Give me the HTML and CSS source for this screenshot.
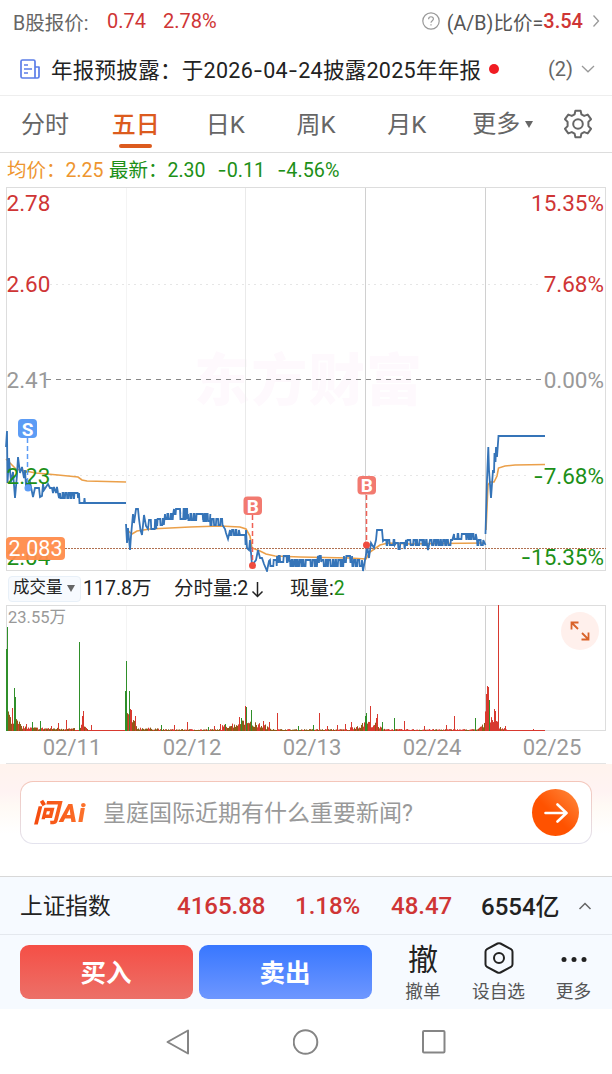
FILE: index.html
```html
<!DOCTYPE html>
<html lang="zh-CN">
<head>
    <meta charset="UTF-8">
    <meta name="viewport" content="width=device-width, initial-scale=1.0">
    <title>五日</title>
    <link rel="stylesheet" href="styles.css">
</head>
<body>
    <div class="quote">
        <span class="quote-label">B股报价:</span>
        <span class="up quote-price">0.74</span>
        <span class="up quote-pct">2.78%</span>
        <div class="ratio">
            <svg width="18" height="18" viewBox="0 0 18 18" fill="none" stroke="#999" stroke-width="1.2">
                <circle cx="9" cy="9" r="8.2"/>
                <path d="M6.6 7.2C6.6 4 11.4 4 11.4 7C11.4 8.6 9 8.8 9 10.8M9 12.3V13.6"/>
            </svg>
            <span class="ratio-label">(A/B)比价=</span><span class="up ratio-value">3.54</span>
            <svg class="ratio-arrow" width="8" height="14" viewBox="0 0 8 14" fill="none" stroke="#999" stroke-width="1.3"><path d="M1.5 1.5L6.5 7L1.5 12.5"/></svg>
        </div>
    </div>

    <div class="notice">
        <svg width="20" height="20" viewBox="0 0 20 20" fill="none" stroke="#5b7de8" stroke-width="1.7" stroke-linejoin="round">
            <path d="M15 19H2.5Q1 19 1 17.5V2.5Q1 1 2.5 1H13.5Q15 1 15 2.5V19H17.5Q19 19 19 17.5V8H15"/>
            <path d="M4 6H8M4 10H12M4 14H8"/>
        </svg>
        <span class="notice-text">年报预披露：于2026<span class="dash">-</span>04<span class="dash">-</span>24披露2025年年报</span>
        <i class="dot"></i>
        <span class="notice-count">(2)</span>
        <svg width="14" height="8" viewBox="0 0 14 8" fill="none" stroke="#999" stroke-width="1.3"><path d="M1 1L7 6.8L13 1"/></svg>
    </div>

    <div class="tabs">
        <span class="tab">分时</span>
        <span class="tab active">五日</span>
        <span class="tab">日K</span>
        <span class="tab">周K</span>
        <span class="tab">月K</span>
        <span class="tab tab-more">更多<i class="caret"></i></span>
        <svg class="gear" width="30" height="30" viewBox="0 0 30 30" fill="none" stroke="#666" stroke-width="2" stroke-linejoin="round">
            <path d="M12.4 1.8H17.6L18.4 5.3L21.2 6.9L24.7 5.6L28 10.2L25.4 12.9V17.1L28 19.8L24.7 24.4L21.2 23.1L18.4 24.7L17.6 28.2H12.4L11.6 24.7L8.8 23.1L5.3 24.4L2 19.8L4.6 17.1V12.9L2 10.2L5.3 5.6L8.8 6.9L11.6 5.3Z"/>
            <circle cx="15" cy="15" r="4.8"/>
        </svg>
    </div>

    <div class="summary">
        <span class="avg">均价：2.25</span>
        <span class="down">最新：2.30</span>
        <span class="down change"><span class="dash">-</span>0.11</span>
        <span class="down change"><span class="dash">-</span>4.56%</span>
    </div>

    <svg class="chart" width="612" height="385" viewBox="0 187 612 385">
        <text class="watermark" x="308" y="400" text-anchor="middle" textLength="228">东方财富</text>
        <g class="grid">
            <path d="M6 187.5H606M6.5 187V571M605.5 187V571M6 570.5H606"/>
            <path class="faint" d="M126.5 188V570"/>
            <path class="light" d="M245.5 188V570"/>
            <path class="strong" d="M365.5 188V570M485.5 188V570"/>
            <path class="dots" d="M50 284.5H540M50 475.5H530"/>
        </g>
        <path class="zero" d="M46 379.5H543"/>
        <path class="cost" d="M65 548.5H606"/>
        <g class="axis">
            <text class="up" x="6.5" y="211">2.78</text>
            <text class="up" x="6.5" y="292">2.60</text>
            <text class="flat" x="6.5" y="388">2.41</text>
        </g>
        <g id="lines"></g>
        <g class="axis">
            <text class="down" x="6.5" y="484">2.23</text>
            <text class="down" x="6.5" y="565">2.04</text>
            <text class="up" x="604" y="211" text-anchor="end">15.35%</text>
            <text class="up" x="604" y="292" text-anchor="end">7.68%</text>
            <text class="flat" x="604" y="388" text-anchor="end">0.00%</text>
            <text class="down" x="604" y="484" text-anchor="end"><tspan class="dash">-</tspan>7.68%</text>
            <text class="down" x="604" y="565" text-anchor="end"><tspan class="dash">-</tspan>15.35%</text>
        </g>
        <rect x="6" y="537" width="59" height="23" rx="4" fill="#ff8c4b" fill-opacity="0.95"/>
        <text class="cost-label" x="8.5" y="556">2.083</text>
        <g class="sell">
            <path d="M27.5 438V486"/>
            <circle cx="28" cy="488" r="3.5"/>
            <rect x="18" y="419" width="19" height="19" rx="4"/>
            <text x="27.5" y="435.5">S</text>
        </g>
        <g class="buy">
            <path d="M252.5 515V562"/>
            <circle cx="252.5" cy="565.5" r="3.5"/>
            <rect x="243.5" y="496.5" width="18.5" height="18.5" rx="4"/>
            <text x="252.7" y="512.5">B</text>
            <path d="M366.5 495V543"/>
            <circle cx="366.5" cy="545" r="3.5"/>
            <rect x="357.5" y="476" width="18.5" height="18.5" rx="4"/>
            <text x="366.7" y="492">B</text>
        </g>
    </svg>

    <div class="volume-info">
        <span class="select">成交量<i class="caret"></i></span>
        <span class="vol-total">117.8万</span>
        <span class="vol-minute">分时量:2<svg width="13" height="17" viewBox="0 0 13 17" fill="none" stroke="#222" stroke-width="1.5"><path d="M6.5 1V15.5M1.5 10.5L6.5 15.5L11.5 10.5"/></svg></span>
        <span class="vol-now">现量:<span class="down">2</span></span>
    </div>

    <svg class="chart" width="612" height="126" viewBox="0 605 612 126">
        <g class="grid">
            <path d="M6 605.5H606M6.5 605V731M605.5 605V731M6 730.5H606"/>
            <path class="faint" d="M126.5 606V730"/>
            <path class="light" d="M245.5 606V730"/>
            <path class="strong" d="M365.5 606V730M485.5 606V730"/>
        </g>
        <text class="vol-max" x="8" y="623">23.55万</text>
        <g id="bars"></g>
        <circle cx="580" cy="631" r="19" fill="#fff0ec"/>
        <path d="M571.5 629.5V622.5H578.5M572 623L578 629M588.5 632.5V639.5H581.5M588 639L582 633" fill="none" stroke="#d9632a" stroke-width="1.8"/>
    </svg>

    <div class="dates">
        <span>02/11</span>
        <span>02/12</span>
        <span>02/13</span>
        <span>02/24</span>
        <span>02/25</span>
    </div>

    <div class="ai">
        <div class="ai-box">
            <span class="ai-logo">问Ai</span>
            <span class="ai-question">皇庭国际近期有什么重要新闻?</span>
            <span class="ai-go">
                <svg width="24" height="20" viewBox="0 0 24 20" fill="none" stroke="#fff" stroke-width="2.6" stroke-linecap="round" stroke-linejoin="round"><path d="M1.5 10H22M13.5 1.5L22.5 10L13.5 18.5"/></svg>
            </span>
        </div>
    </div>

    <div class="index">
        <span class="index-name">上证指数</span>
        <b class="up index-value">4165.88</b>
        <b class="up index-pct">1.18%</b>
        <b class="up index-change">48.47</b>
        <b class="index-amount">6554亿</b>
        <svg width="14" height="8" viewBox="0 0 14 8" fill="none" stroke="#666" stroke-width="1.5"><path d="M1.5 7L7 1.5L12.5 7"/></svg>
    </div>

    <div class="actions">
        <button class="btn btn-buy">买入</button>
        <button class="btn btn-sell">卖出</button>
        <div class="action action-cancel">
            <span class="action-icon">撤</span>
            <span>撤单</span>
        </div>
        <div class="action action-watch">
            <svg class="action-icon" width="30" height="32" viewBox="0 0 30 32" fill="none" stroke="#222" stroke-width="2" stroke-linejoin="round">
                <path d="M13.5 1.5Q15 .8 16.5 1.5L27 7.2Q28.5 8 28.5 9.7V22.3Q28.5 24 27 24.8L16.5 30.5Q15 31.2 13.5 30.5L3 24.8Q1.5 24 1.5 22.3V9.7Q1.5 8 3 7.2Z"/>
                <circle cx="15" cy="16" r="5"/>
            </svg>
            <span>设自选</span>
        </div>
        <div class="action action-more">
            <svg class="action-icon" width="26" height="32" viewBox="0 0 26 32" fill="#222">
                <circle cx="3" cy="17.5" r="2.5"/><circle cx="13" cy="17.5" r="2.5"/><circle cx="23" cy="17.5" r="2.5"/>
            </svg>
            <span>更多</span>
        </div>
    </div>

    <div class="navbar">
        <svg width="24" height="26" viewBox="0 0 24 26"><path d="M22 1.5V24.5L1.5 13Z"/></svg>
        <svg width="26" height="26" viewBox="0 0 26 26"><circle cx="12.5" cy="13" r="11.8"/></svg>
        <svg width="24" height="24" viewBox="0 0 24 24"><rect x="1" y="1" width="21.5" height="21.5" rx="1"/></svg>
    </div>

    <script src="script.js"></script>
</body>
</html>
```
FILE: styles.css
```css
* {
    box-sizing: border-box;
}
body {
    margin: 0;
    width: 612px;
    height: 1074px;
    overflow: hidden;
    background: #fff;
    color: #222;
    font-family: Roboto, "Noto Sans CJK SC", sans-serif;
    white-space: nowrap;
}
svg {
    display: block;
    flex: none;
}
.up {
    color: #cf3535;
    fill: #cf3535;
}
.down {
    color: #1d9018;
    fill: #1d9018;
}
.flat {
    fill: #999;
}
.dash {
    font-family: Inter, sans-serif;
}
.caret {
    display: inline-block;
    border: 4px solid transparent;
    border-top: 7px solid #666;
    border-bottom: 0;
}

/* B share quote */
.quote {
    display: flex;
    align-items: center;
    height: 43px;
    padding: 0 12px 1px 13px;
    font-size: 20px;
}
.quote-label {
    width: 94px;
    font-size: 19.5px;
    color: #666;
}
.quote-pct {
    margin-left: 17px;
}
.ratio {
    display: flex;
    align-items: center;
    margin-left: auto;
    color: #555;
}
.ratio-label {
    margin-left: 7px;
    font-size: 19.6px;
}
.ratio-value {
    font-weight: 500;
}
.ratio-arrow {
    margin-left: 9px;
}

/* notice */
.notice {
    display: flex;
    align-items: center;
    height: 53px;
    padding: 0 17px 0 20px;
    border-bottom: 1px solid #eee;
}
.notice-text {
    margin-left: 11px;
    padding-bottom: 2px;
    font-size: 21.5px;
    letter-spacing: 0.29px;
}
.dot {
    width: 10px;
    height: 10px;
    margin-left: 8px;
    border-radius: 50%;
    background: #f01c22;
}
.notice-count {
    margin-left: auto;
    margin-right: 8px;
    font-size: 20px;
    color: #666;
}

/* period tabs */
.tabs {
    display: flex;
    align-items: center;
    height: 57px;
    padding: 0 19px 0 21px;
    border-bottom: 1px solid #ddd;
    font-size: 24px;
    line-height: 58px;
    color: #666;
}
.tab {
    width: 91.5px;
    height: 56px;
}
.tab.active {
    width: 94.5px;
    color: #dc5b1e;
    font-weight: 500;
}
.tab.active::after {
    content: "";
    display: block;
    width: 33px;
    height: 4px;
    margin: -10px 0 0 7px;
    border-radius: 2px;
    background: #dc5b1e;
}
.tab-more {
    display: flex;
    align-items: center;
    margin-left: -6px;
}
.tab-more .caret {
    margin-left: 5px;
}
.gear {
    margin-left: auto;
}

/* average and latest price */
.summary {
    display: flex;
    align-items: baseline;
    height: 34px;
    padding-left: 7px;
    font-size: 19.5px;
    line-height: 34px;
}
.avg {
    width: 102px;
    color: #ee952f;
}
.change {
    margin-left: 12px;
    font-size: 19.8px;
}

/* price chart */
.watermark {
    font-size: 56px;
    font-weight: 900;
    fill: #fef9fd;
}
.grid path {
    fill: none;
    stroke: #ddd;
}
.grid .faint {
    stroke: #f4f4f4;
}
.grid .light {
    stroke: #eaeaea;
}
.grid .strong {
    stroke: #d0d0d0;
}
.grid .dots {
    stroke: #e6e6e6;
    stroke-dasharray: 2 4;
}
.zero {
    stroke: #888;
    stroke-dasharray: 5 5;
}
.cost {
    stroke: #b07050;
    stroke-dasharray: 2 1;
}
.axis text {
    font-size: 22.5px;
}
.cost-label {
    font-size: 21.5px;
    fill: #fff;
}
.price-line {
    fill: none;
    stroke: #3574b8;
    stroke-width: 1.8;
}
.avg-line {
    fill: none;
    stroke: #eba04a;
    stroke-width: 1.6;
}
.sell, .buy {
    font-size: 19px;
    font-weight: 700;
    text-anchor: middle;
}
.sell {
    fill: #5c9cf5;
}
.buy {
    fill: #f27a70;
}
.buy circle {
    fill: #ef4c3f;
}
.sell path {
    stroke: #5c9cf5;
    stroke-width: 1.5;
    stroke-dasharray: 5 3;
}
.buy path {
    stroke: #ef6055;
    stroke-width: 1.5;
    stroke-dasharray: 5 3;
}
.sell text, .buy text {
    fill: #fff;
}

/* volume */
.volume-info {
    display: flex;
    align-items: center;
    height: 33px;
    padding-left: 8px;
    font-size: 19.5px;
    line-height: 24px;
}
.select {
    display: flex;
    align-items: center;
    width: 73px;
    height: 26px;
    padding: 0 0 1px 4px;
    border: 1px solid #e8f0f8;
    border-radius: 4px;
    background: #f7fafe;
    font-size: 16.5px;
}
.select .caret {
    margin: 1px 0 0 4px;
}
.vol-total {
    width: 91px;
    margin-left: 2px;
}
.vol-minute {
    display: flex;
    align-items: center;
    width: 116px;
}
.vol-minute svg {
    margin: 1px 0 0 3px;
}
.vol-max {
    font-size: 16.5px;
    fill: #999;
}
.bar-up {
    stroke: #d8392f;
}
.bar-down {
    stroke: #2f8f2a;
}
.bar-mixed {
    stroke: #8d5a16;
}
.dates {
    display: grid;
    grid-template-columns: repeat(5, 120px);
    align-items: center;
    height: 33px;
    margin: 0 6px;
    padding-left: 6px;
    border-bottom: 1px solid #e4e4e4;
    font-size: 22px;
    text-align: center;
    color: #999;
}

/* AI question */
.ai {
    height: 112px;
    padding: 17px 20px 0;
    background: linear-gradient(#fff3ed, #fff3f3 25%, #fffaf5 38%, #fff 62%);
}
.ai-box {
    display: flex;
    align-items: center;
    height: 63px;
    padding: 0 12px;
    border: 1px solid transparent;
    border-radius: 13px;
    background: linear-gradient(#fff, #fff) padding-box, linear-gradient(#f4c5b9, #e3e3ee) border-box;
}
.ai-logo {
    width: 70px;
    padding-bottom: 4px;
    font-size: 26px;
    font-weight: 900;
    font-style: italic;
    letter-spacing: 1px;
    color: transparent;
    background: linear-gradient(90deg, #f4490c, #ff8138);
    background-clip: text;
}
.ai-question {
    padding-bottom: 3px;
    font-size: 23px;
    color: #999;
}
.ai-go {
    display: flex;
    align-items: center;
    justify-content: center;
    width: 47px;
    height: 47px;
    margin-left: auto;
    border-radius: 50%;
    background: linear-gradient(45deg, #ff5200 45%, #ff8c40);
}

/* index row */
.index {
    display: flex;
    align-items: center;
    height: 58px;
    padding: 0 20px;
    border-top: 1px solid #d8d8d8;
    background: #f6faff;
    font-size: 24px;
}
.index b {
    font-weight: 500;
}
.index-name {
    width: 157px;
    padding-bottom: 2px;
    font-size: 22.7px;
}
.index-value {
    width: 118px;
}
.index-pct {
    width: 96px;
}
.index-change {
    width: 90px;
}
.index-amount {
    padding-bottom: 3px;
}
.index svg {
    margin-left: auto;
}

/* trade actions */
.actions {
    display: flex;
    height: 75px;
    padding: 10px 0 0 20px;
    border-top: 1px solid #e4e8ee;
    background: #f6faff;
}
.btn {
    flex: none;
    width: 173px;
    height: 54px;
    margin-right: 6px;
    padding: 0 1px 3px 0;
    border: 0;
    border-radius: 9px;
    color: #fff;
    font: 700 25.5px Roboto, "Noto Sans CJK SC", sans-serif;
}
.btn-buy {
    background: linear-gradient(#f54f46, #ec7068);
}
.btn-sell {
    background: linear-gradient(#3877ff, #6e97ff);
}
.action {
    display: flex;
    flex: none;
    flex-direction: column;
    align-items: center;
    font-size: 17.7px;
    line-height: 24px;
    color: #555;
}
.action-icon {
    height: 32px;
    margin: -3px 0 6px;
}
.action-cancel {
    width: 90px;
}
.action-cancel .action-icon {
    font-size: 30px;
    line-height: 36px;
    color: #222;
}
.action-watch {
    width: 61px;
}
.action-more {
    width: 89px;
}

/* system navigation */
.navbar {
    display: flex;
    align-items: center;
    height: 65px;
    padding-left: 166px;
    gap: 103px;
}
.navbar svg {
    fill: none;
    stroke: #858585;
    stroke-width: 2;
    stroke-linejoin: round;
}
```
FILE: script.js
```js
const NS = 'http://www.w3.org/2000/svg';
let seed = 7;

function rand() {
    seed = (seed * 16807) % 2147483647;
    return seed / 2147483647;
}

function add(parent, tag, attrs) {
    const el = document.createElementNS(NS, tag);
    for (const key in attrs) el.setAttribute(key, attrs[key]);
    document.getElementById(parent).appendChild(el);
}

// [x, y] is a point, [x0, x1, top, bottom] is a stretch that flips between two ticks
const price = [
    [[6,447],[7,431],[7.5,483],[9,458],[11,482],[13,472],[15,498],[17,475],[18,457],[20,473],[22,467],[24,478],[25,470],[26,486],[27,479],[28,488],[30,482],[33,497],[35,488],[39,488],[40,497],[42,496],[43,484],[44,490],[46,487],[48,484],[50,488],[52,488],[53,493],[54,487],[56,493],[57,487],[58,493],[59,498],[60,78,493,498],[79,493],[79.5,503],[84,503],[84.5,498],[85,503],[126,503]],
    [[126,524],[127,543],[128,528],[130,550],[131,536],[133,514],[134,523],[136,509],[138,509],[139,519],[140.5,530],[142,535],[144,515],[146,526],[148,529],[149,156,520,529],[156,165,519,525],[165,173,514,519],[174,180,509,514],[180,188,509,519],[188,203,514,520],[203,210,514,521],[210,223,519,525],[225,529],[226,533],[228,539],[230,239,530,535],[240,246,535,545],[246,530],[247,548],[249,550],[250,540],[252,565],[256,560],[258,550],[260,558],[262,558],[264,564],[267,571],[269,561],[270,277,560,566],[277,290,556,562],[290,318,560,566],[318,322,556,562],[322,344,560,566],[344,352,556,562],[352,362,560,566],[363,571],[365,560],[366,555],[367,545],[369,558],[371,543],[374,548],[376,540],[377,530],[382,530],[383,541],[384,395,540,545],[396,405,543,549],[406,427,540,545],[428,550],[430,453,540,545],[454,476,534,539],[477,484,540,545],[485.5,545]],
    [[485.5,534],[487,480],[488.3,447],[489,470],[491,498],[493,470],[494,473],[494.5,453],[495.5,462],[496,447],[497,457],[498.5,436],[545,436]]
];

const average = [
    'M6 459L12 465L16 469L20 470L36 473L58 475L78 477L82 480L87 481L126 482',
    'M127 530L132 534L137 531L150 529L190 527L220 526L240 527L246 529L250 536L252 548L260 551L266 554L275 556L300 557L350 558L366 559L370 552L380 545L388 543L410 544L440 543.5L485 543',
    'M486 530L488 485L490 482L494 482L497 476L498.5 468L505 466L515 465L545 464.5'
];

average.forEach(d => add('lines', 'path', { class: 'avg-line', d: d }));

price.forEach(day => {
    const pts = [];
    day.forEach(p => {
        if (p.length === 2) {
            pts.push(p.join());
            return;
        }
        let y = p[2];
        for (let x = p[0]; x <= p[1]; x += 0.8 + rand() * 1.5) {
            pts.push(x + ',' + y);
            if (rand() < 0.85) y = y === p[2] ? p[3] : p[2];
            pts.push((x + 0.4) + ',' + y);
        }
    });
    add('lines', 'polyline', { class: 'price-line', points: pts.join(' ') });
});

const BASE = 731;

function bar(x, h, type) {
    add('bars', 'path', { class: 'bar-' + type, d: `M${x + 0.5} ${BASE}V${BASE - h}` });
}

// background volume: [from, to, max height at start, max height at end]
const noise = [
    [6,12,30,16],[12,20,16,10],[20,30,7,3],[30,75,4,3],[79,88,8,3],[125,137,26,5],[137,160,4,3],[160,220,2,2],
    [222,238,6,10],[238,248,14,20],[248,266,10,7],[266,276,5,2],[276,350,2,2],[350,364,4,9],
    [364,378,14,7],[378,390,5,2],[390,478,2,2],[478,485,4,9],[485,492,42,15],[492,500,18,5],[500,507,4,3]
];
add('bars', 'path', { class: 'bar-up', d: 'M6 730.5H545' });
noise.forEach(([x0, x1, h0, h1]) => {
    for (let x = x0; x < x1; x++) {
        const h = h0 + (h1 - h0) * (x - x0) / (x1 - x0);
        const types = x > 364 ? ['up', 'up', 'up', 'mixed'] : ['mixed', 'mixed', 'up'];
        bar(x, Math.max(1, h * (0.35 + rand() * 0.65)), types[Math.floor(rand() * types.length)]);
    }
});

const peaks = {
    up: [[12,23],[26,7],[51,5],[58,8],[66,11],[83,20],[82,15],[91,6],[130,22],[131,21],[135,15],[174,6],[187,9],[214,5],[220,7],[239,14],[245,25],[263,10],[269,9],[277,18],[319,18],[327,5],[337,6],[345,7],[351,9],[370,25],[376,13],[377,17],[404,10],[424,5],[446,6],[454,15],[486,37],[487,45],[488,44],[494,22],[495,20],[498,126],[505,5],[533,2]],
    down: [[6,82],[7,104],[14,43],[15,34],[32,9],[40,10],[79,89],[125,40],[126,70],[129,40],[161,6],[208,4],[225,7],[241,13],[246,24],[251,21],[298,5],[313,6],[365,15],[366,18],[382,9],[394,13],[475,13],[489,31]]
};
for (const type in peaks) {
    peaks[type].forEach(([x, h]) => bar(x, h, type));
}
```
